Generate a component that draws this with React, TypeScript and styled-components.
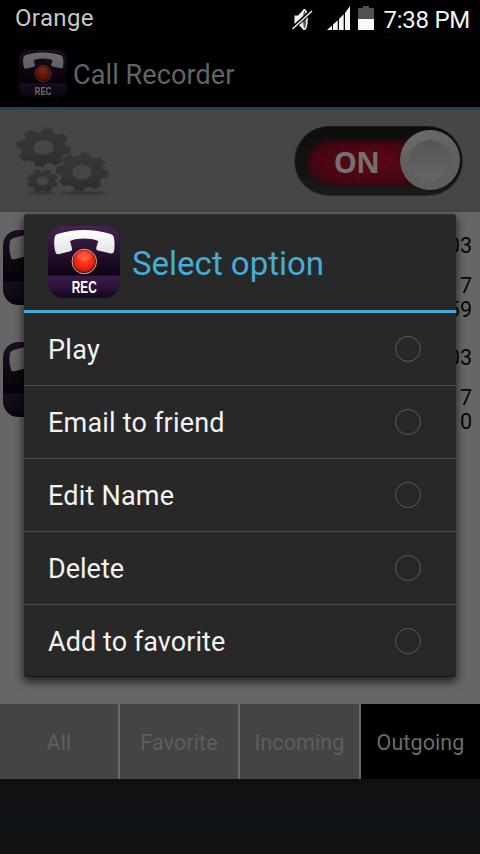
import React from 'react';
import styled, { createGlobalStyle } from 'styled-components';

const GlobalStyle = createGlobalStyle`
  * { box-sizing: border-box; }
  body { margin: 0; background: #000; font-family: Roboto, "Noto Sans", sans-serif; }
`;

const Screen = styled.div`
  position: relative;
  width: 480px;
  height: 854px;
  overflow: hidden;
  display: flex;
  flex-direction: column;
  background: #0f1113;
`;

const StatusBar = styled.header`
  height: 38px;
  flex: none;
  display: flex;
  align-items: center;
  padding: 0 10px 0 15px;
  background: #000;
  border-bottom: 1px solid #050505;
`;

const Carrier = styled.span`
  flex: 1;
  color: #c6c6c6;
  font-size: 24px;
  line-height: 28px;
  letter-spacing: 0.35px;
  padding-bottom: 1px;
`;

const StatusIcons = styled.svg`
  display: block;
  width: 84px;
  height: 38px;
`;

const Clock = styled.span`
  margin-left: 8px;
  color: #f4f4f4;
  font-size: 24px;
  line-height: 28px;
  letter-spacing: -0.25px;
  padding-top: 3px;
  white-space: nowrap;
`;

const ActionBar = styled.div`
  height: 72px;
  flex: none;
  display: flex;
  align-items: center;
  gap: 6px;
  padding: 2px 0 0 19px;
  background: #010102;
  border-bottom: 3px solid #1b4655;
`;

const AppTitle = styled.h1`
  margin: 0;
  padding-top: 2px;
  color: #636363;
  font-size: 27px;
  font-weight: 400;
  line-height: 34px;
  letter-spacing: 0.1px;
`;

const LogoSvg = styled.svg<{ $size: number; $dim?: boolean }>`
  display: block;
  flex: none;
  width: ${p => p.$size}px;
  height: ${p => p.$size}px;
  filter: ${p => (p.$dim ? 'brightness(0.42)' : 'none')};
`;

const Controls = styled.div`
  height: 102px;
  flex: none;
  display: flex;
  justify-content: space-between;
  align-items: flex-start;
  padding: 16px 17px 0 14px;
  background: #464646;
`;

const GearsSvg = styled.svg`
  display: block;
  width: 100px;
  height: 72px;
`;

const Switch = styled.div`
  width: 169px;
  height: 70px;
  border-radius: 35px;
  padding: 12px 4px 11px 12px;
  display: flex;
  background: linear-gradient(#0e0e0d, #121210 60%, #1a1a18);
  border: 1px solid #2c2c2b;
  border-top-color: #161616;
`;

const Track = styled.div`
  width: 118px;
  height: 46px;
  flex: none;
  border-radius: 23px 0 0 23px;
  padding-right: 19px;
  display: flex;
  align-items: center;
  justify-content: center;
  background: repeating-linear-gradient(45deg, rgba(0, 0, 0, 0.13) 0 1px, transparent 1px 3px),
    radial-gradient(ellipse at 55% 50%, #5c0716 10%, #4a0713 60%, #2d0a0e 100%);
  box-shadow: inset 0 2px 4px #24070b;
`;

const SwitchLabel = styled.span`
  color: #777072;
  font: 700 29px/36px "Open Sans", sans-serif;
  letter-spacing: -0.6px;
`;

const Knob = styled.div`
  width: 60px;
  height: 60px;
  flex: none;
  margin: -9px 0 0 -25px;
  padding: 10px;
  border-radius: 50%;
  background: linear-gradient(165deg, #6c6c6c, #616161 45%, #5e5e5e);
  box-shadow: 0 0 2px #111;

  &::after {
    content: '';
    display: block;
    height: 100%;
    border-radius: 50%;
    background: linear-gradient(#555, #656565);
    box-shadow: 0 0 2px #5a5a5a;
  }
`;

const CallList = styled.div`
  flex: none;
  height: 492px;
  padding-top: 8px;
  background: #666;
`;

const CallRow = styled.div`
  height: 112px;
  display: flex;
  justify-content: space-between;
  padding: 10px 8px 0 3px;
`;

const CallDetails = styled.div`
  padding-top: 4px;
  display: flex;
  flex-direction: column;
  align-items: flex-end;
  color: #060606;
  font-size: 21.5px;
  line-height: 24px;
`;

const CallDate = styled.div`
  margin-bottom: 16px;
`;

const Tabs = styled.nav`
  height: 75px;
  flex: none;
  display: grid;
  grid-template-columns: 118px 118px 119px 119px;
  column-gap: 2px;
  background: #6b6b6b;
`;

const Tab = styled.div<{ $active?: boolean }>`
  display: flex;
  align-items: center;
  justify-content: center;
  padding-top: 2px;
  background: ${p => (p.$active ? '#000' : '#444')};
  color: ${p => (p.$active ? '#6b6b6b' : '#5e5e5e')};
  font-size: 21.5px;
  letter-spacing: 0.1px;
`;

const NavArea = styled.div`
  flex: 1;
  background: linear-gradient(#0f1012, #0f1317 55%, #111113 90%);
`;

const Dialog = styled.section`
  position: absolute;
  left: 24px;
  top: 214px;
  width: 432px;
  height: 463px;
  border-radius: 3px;
  background: #282828;
  border-top: 1px solid #343434;
  border-bottom: 1px solid #161616;
  box-shadow: 0 4px 9px 1px rgba(0, 0, 0, 0.65);
`;

const DialogHeader = styled.div`
  height: 98px;
  display: flex;
  align-items: center;
  gap: 12px;
  padding: 0 24px 1px;
  border-bottom: 3px solid #45acd8;
`;

const DialogTitle = styled.h2`
  margin: 0;
  color: #45acd8;
  font-size: 33px;
  font-weight: 400;
  line-height: 40px;
  padding-top: 3px;
`;

const Option = styled.div<{ $tracking: number }>`
  height: 73px;
  display: flex;
  align-items: center;
  justify-content: space-between;
  padding: 0 35px 0 24px;
  border-bottom: 1px solid #4a4a4a;
  color: #f3f3f3;
  font-size: 27px;
  letter-spacing: ${p => p.$tracking}px;

  &:last-child { border-bottom-color: transparent; }
`;

const OptionLabel = styled.span`
  padding-top: 1px;
`;

const Radio = styled.span`
  width: 26px;
  height: 26px;
  border: 1.5px solid #5c5c5c;
  border-radius: 50%;
`;

function RecLogo({ size, dim, label = true }: { size: number; dim?: boolean; label?: boolean }) {
  const id = React.useId().replace(/[^a-zA-Z0-9]/g, '');
  return (
    <LogoSvg viewBox="0 0 72 72" $size={size} $dim={dim}>
      <defs>
        <linearGradient id={`${id}bg`} x1="0" y1="0" x2="0" y2="1">
          <stop offset="0" stopColor="#492251" />
          <stop offset="0.28" stopColor="#2f1439" />
          <stop offset="0.68" stopColor="#0e0413" />
          <stop offset="0.7" stopColor="#3a1a4a" />
          <stop offset="0.85" stopColor="#2c1238" />
          <stop offset="1" stopColor="#12071a" />
        </linearGradient>
        <linearGradient id={`${id}ph`} x1="0" y1="0" x2="0" y2="1">
          <stop offset="0" stopColor="#fff" />
          <stop offset="1" stopColor="#e2e2e2" />
        </linearGradient>
        <radialGradient id={`${id}rd`} cx="0.5" cy="0.4" r="0.6">
          <stop offset="0" stopColor="#ff4a2c" />
          <stop offset="0.6" stopColor="#fa2a10" />
          <stop offset="1" stopColor="#c01a0c" />
        </radialGradient>
      </defs>
      <rect width="72" height="72" rx="15" fill={`url(#${id}bg)`} />
      <path
        d="M6.5 12 Q6.8 8.8 10 7.8 C26 2.6 46 2.6 62 7.8 Q65.6 8.9 66 12 C66.8 17 66.8 21 66 25.5 Q65.5 27.7 63 27.4 L50 24.6 Q47.8 24 48.2 22 L50.3 15 C41 11.8 31 11.8 22 15 L24 22.5 Q24.4 24.8 22.3 25.3 L10.5 28.3 Q8 28.6 7.4 26 C6.2 21 5.8 17 6.5 12Z"
        fill={`url(#${id}ph)`}
      />
      <circle cx="36.3" cy="35.5" r="12.2" fill="#401117" stroke="#d5b3ab" strokeWidth="1" />
      <circle cx="36.3" cy="35" r="10.9" fill={`url(#${id}rd)`} />
      <ellipse cx="36.3" cy="30.5" rx="7" ry="4.5" fill="#ff9075" opacity="0.35" />
      {label && (
        <text
          x="36.2"
          y="67"
          textAnchor="middle"
          textLength="25"
          lengthAdjust="spacingAndGlyphs"
          fill="#fff"
          fontFamily="Liberation Sans, sans-serif"
          fontWeight="700"
          fontSize="16.5"
        >
          REC
        </text>
      )}
    </LogoSvg>
  );
}

function gearPath(cx: number, cy: number, rx: number, ry: number, teeth: number, turn: number) {
  const pts: string[] = [];
  const step = (Math.PI * 2) / teeth;
  const profile: [number, number][] = [[-0.36, 0.8], [-0.2, 0.98], [0.2, 0.98], [0.36, 0.8]];
  for (let i = 0; i < teeth; i++) {
    for (const [offset, r] of profile) {
      const a = (i + offset) * step + turn;
      pts.push(`${(cx + Math.cos(a) * rx * r).toFixed(1)} ${(cy + Math.sin(a) * ry * r).toFixed(1)}`);
    }
  }
  const hx = rx * 0.37;
  const hy = ry * 0.37;
  return `M${pts.join('L')}Z M${cx - hx} ${cy}a${hx} ${hy} 0 1 0 ${hx * 2} 0a${hx} ${hy} 0 1 0 ${-hx * 2} 0Z`;
}

function Gears() {
  return (
    <GearsSvg viewBox="0 0 100 72">
      <defs>
        <linearGradient id="gear" x1="0" y1="0" x2="0" y2="1">
          <stop offset="0" stopColor="#363636" />
          <stop offset="0.6" stopColor="#333333" />
          <stop offset="1" stopColor="#2c2c2c" />
        </linearGradient>
        <filter id="soft" x="-30%" y="-200%" width="160%" height="500%">
          <feGaussianBlur stdDeviation="2 0.8" />
        </filter>
      </defs>
      <g filter="url(#soft)" fill="#303030">
        <ellipse cx="28" cy="67" rx="14" ry="1.3" />
        <ellipse cx="70" cy="67" rx="24" ry="1.5" />
      </g>
      <g fill="url(#gear)" fillRule="evenodd" stroke="#3a3a3a" strokeWidth="0.8" strokeLinejoin="round">
        <path d={gearPath(29.5, 21.5, 28, 20, 8, -1.4)} />
        <path d={gearPath(68, 46, 27, 20, 8, -1.45)} />
        <path d={gearPath(28.5, 55, 16.5, 12, 8, -1.2)} />
      </g>
    </GearsSvg>
  );
}

function SystemIcons() {
  return (
    <StatusIcons viewBox="292 0 84 38">
      <path d="M295.5 15.5h3.5l6-6.5q3.5 4 3.5 10.5t-3.5 11l-6-6.5h-3.5z" fill="#f0f0f0" />
      <ellipse cx="305.6" cy="19.5" rx="2.3" ry="9.7" fill="#555" stroke="#f0f0f0" strokeWidth="1.4" />
      <path d="M293 29 312.5 11" stroke="#000" strokeWidth="4" />
      <path d="M293.5 29 313 11" stroke="#eee" strokeWidth="1.5" />
      <g fill="#f5f5f5">
        <path d="M328 30 333 25.5V30z" />
        <path d="M334 24.5 338.7 20.2V30H334z" />
        <path d="M340 19 344.7 14.2V30H340z" />
        <path d="M346 13 351 6V30H346z" />
      </g>
      <path d="M364 6h6v2h5v11h-16V8h5z" fill="#515151" />
      <path d="M359 19h16v11h-16z" fill="#f8f8f8" />
    </StatusIcons>
  );
}

const calls = [
  { date: '03', time: '7', length: '59' },
  { date: '03', time: '7', length: '0' },
];

const options = [
  { label: 'Play', tracking: 0.3 },
  { label: 'Email to friend', tracking: 0.2 },
  { label: 'Edit Name', tracking: 0.2 },
  { label: 'Delete', tracking: 0 },
  { label: 'Add to favorite', tracking: 0.06 },
];

const tabs = ['All', 'Favorite', 'Incoming', 'Outgoing'];

export default function App() {
  return (
    <Screen>
      <GlobalStyle />
      <StatusBar>
        <Carrier>Orange</Carrier>
        <SystemIcons />
        <Clock>7:38 PM</Clock>
      </StatusBar>
      <ActionBar>
        <RecLogo size={48} dim />
        <AppTitle>Call Recorder</AppTitle>
      </ActionBar>
      <Controls>
        <Gears />
        <Switch>
          <Track>
            <SwitchLabel>ON</SwitchLabel>
          </Track>
          <Knob />
        </Switch>
      </Controls>
      <CallList>
        {calls.map((call, i) => (
          <CallRow key={i}>
            <RecLogo size={75} dim label={false} />
            <CallDetails>
              <CallDate>{call.date}</CallDate>
              <div>{call.time}</div>
              <div>{call.length}</div>
            </CallDetails>
          </CallRow>
        ))}
      </CallList>
      <Tabs>
        {tabs.map(tab => (
          <Tab key={tab} $active={tab === 'Outgoing'}>
            {tab}
          </Tab>
        ))}
      </Tabs>
      <NavArea />
      <Dialog>
        <DialogHeader>
          <RecLogo size={72} />
          <DialogTitle>Select option</DialogTitle>
        </DialogHeader>
        {options.map(option => (
          <Option key={option.label} $tracking={option.tracking}>
            <OptionLabel>{option.label}</OptionLabel>
            <Radio />
          </Option>
        ))}
      </Dialog>
    </Screen>
  );
}
